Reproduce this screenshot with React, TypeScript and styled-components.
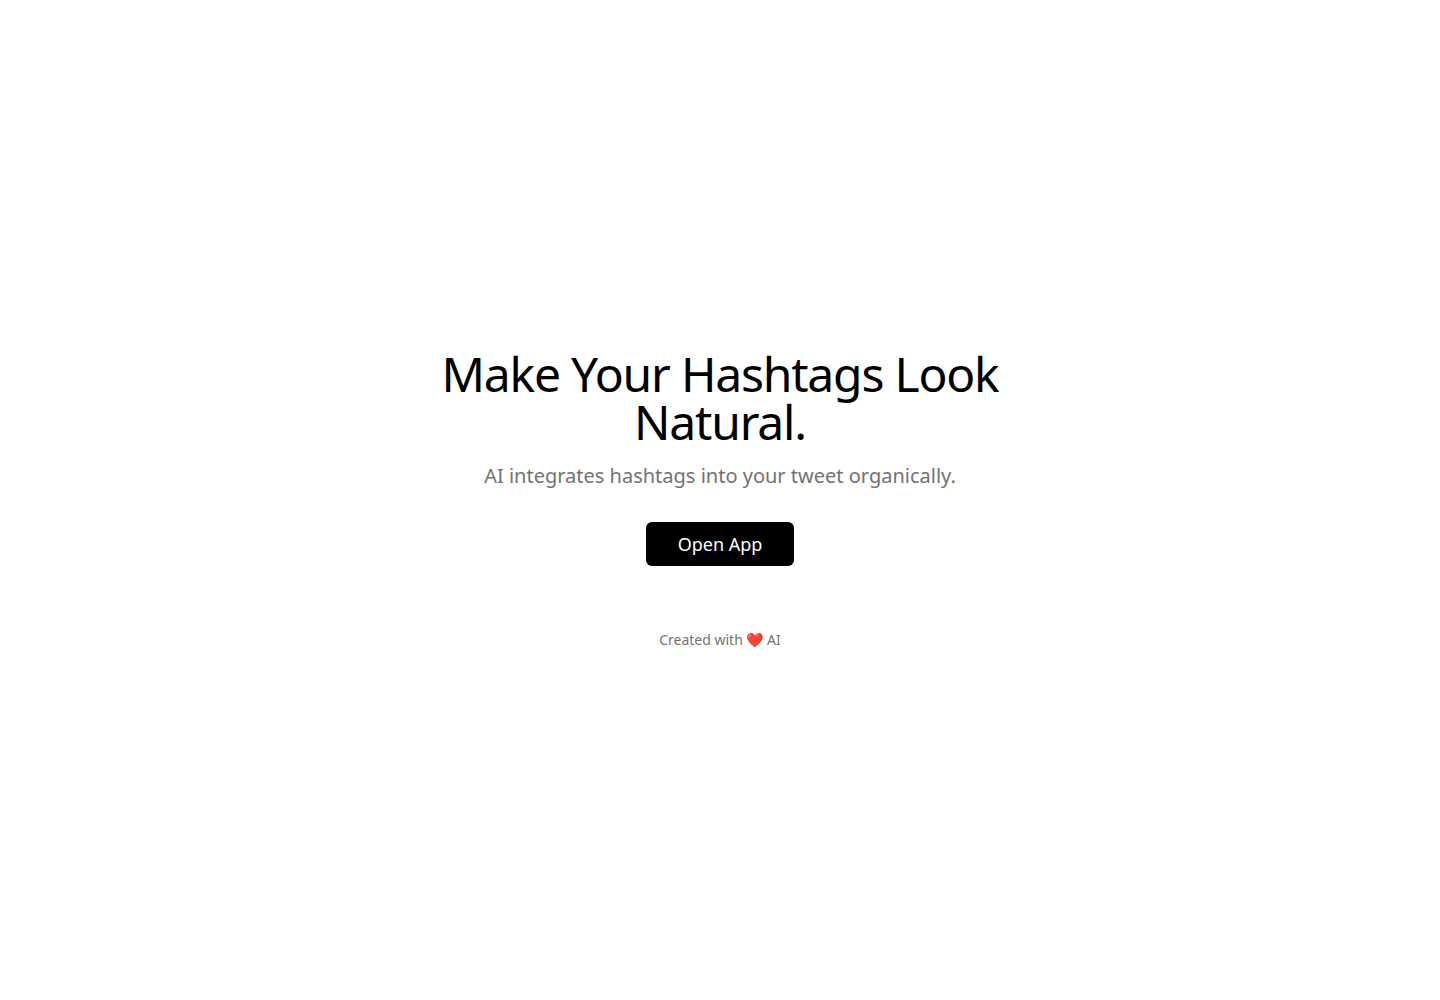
import React from "react";
import styled, { createGlobalStyle } from "styled-components";

const GlobalStyle = createGlobalStyle`
  *, *::before, *::after { box-sizing: border-box; }
  body {
    margin: 0;
    background: #ffffff;
    color: #000000;
    font-family: "Noto Sans", sans-serif;
  }
`;

const Page = styled.main`
  display: flex;
  flex-direction: column;
  align-items: center;
  justify-content: center;
  min-height: 100vh;
  padding: 0 16px;
  text-align: center;
`;

const Hero = styled.section`
  display: flex;
  flex-direction: column;
  align-items: center;
  width: 100%;
  max-width: 576px;
`;

const Title = styled.h1`
  margin: 0 0 16px;
  font-size: 48px;
  font-weight: 400;
  line-height: 48px;
  letter-spacing: -0.025em;
`;

const Tagline = styled.p`
  margin: 0 0 32px;
  color: #737373;
  font-size: 20px;
  line-height: 28px;
`;

const OpenButton = styled.button`
  height: 44px;
  padding: 0 32px;
  border: 0;
  border-radius: 6px;
  background: #000000;
  color: #ffffff;
  font-family: inherit;
  font-size: 18px;
  line-height: 28px;
  cursor: pointer;

  &:hover { background: #262626; }
`;

const Footer = styled.footer`
  margin-top: 64px;
  color: #737373;
  font-size: 14px;
  line-height: 20px;
`;

export default function App() {
  return (
    <>
      <GlobalStyle />
      <Page>
        <Hero>
          <Title>Make Your Hashtags Look Natural.</Title>
          <Tagline>AI integrates hashtags into your tweet organically.</Tagline>
          <OpenButton type="button">Open App</OpenButton>
        </Hero>
        <Footer>Created with ❤️ AI</Footer>
      </Page>
    </>
  );
}
